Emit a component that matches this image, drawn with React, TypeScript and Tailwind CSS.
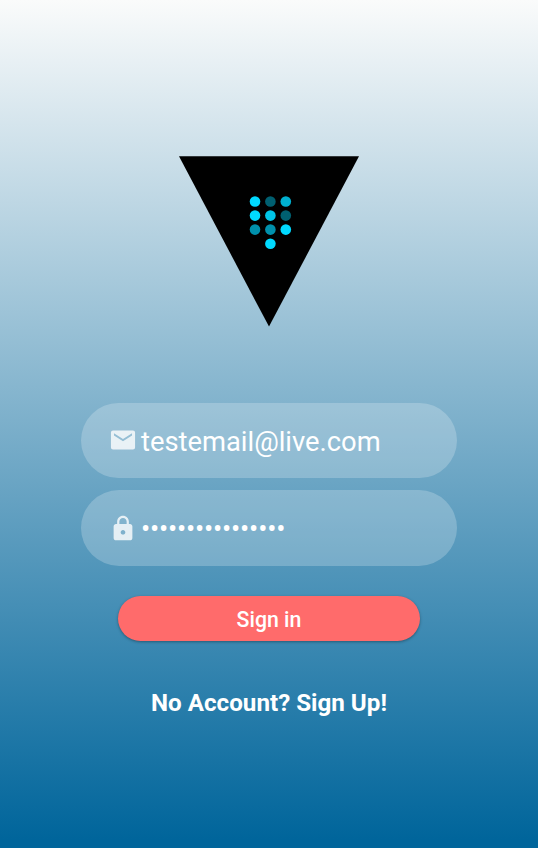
export default function App() {
  return (
    <main className="flex h-[848px] w-[538px] flex-col items-center overflow-hidden bg-[linear-gradient(180deg,#fafbfb_0%,#00659b_99%,#00659b_100%)] pt-[156px] font-[Roboto,sans-serif] text-white">
      <svg width="180" height="171" viewBox="0 0 180 171" aria-hidden="true">
        <path d="M0 .3h180L90 170.5z" fill="#000" />
        <g fill="#00d9ff">
          <circle cx="76" cy="45.5" r="5.3" />
          <circle cx="91.4" cy="45.5" r="5.3" fill="#005f70" />
          <circle cx="106.8" cy="45.5" r="5.3" fill="#00b0d0" />
          <circle cx="76" cy="59.6" r="5.3" />
          <circle cx="91.4" cy="59.6" r="5.3" fill="#00c5e8" />
          <circle cx="106.8" cy="59.6" r="5.3" fill="#005f70" />
          <circle cx="76" cy="73.6" r="5.3" fill="#0090ac" />
          <circle cx="91.4" cy="73.6" r="5.3" fill="#0090ac" />
          <circle cx="106.8" cy="73.6" r="5.3" />
          <circle cx="91.4" cy="87.7" r="5.3" />
        </g>
      </svg>
      <div className="mt-[76px] flex h-[75px] w-[376px] items-center rounded-full bg-white/[0.22] pl-[27px]">
        <svg width="30" height="30" viewBox="0 0 512 512" fill="currentColor" className="mb-px opacity-80"><path fillRule="evenodd" d="M86 94h340a36 36 0 0 1 36 36v252a36 36 0 0 1-36 36H86a36 36 0 0 1-36-36V130a36 36 0 0 1 36-36zm16 84 154 99 154-99v-39L256 238 102 139z" /></svg>
        <span className="ml-[3px] pt-[5px] text-[27.35px]">testemail@live.com</span>
      </div>
      <div className="mt-3 flex h-[76px] w-[376px] items-center rounded-full bg-white/[0.22] pl-[27px]">
        <svg width="30" height="30" viewBox="0 0 512 512" fill="currentColor" className="mb-px opacity-80"><path d="M376 186h-20v-40c0-55-45-100-100-100S156 91 156 146v40h-20c-22 0-40 18-40 40v200c0 22 18 40 40 40h240c22 0 40-18 40-40V226c0-22-18-40-40-40zM256 368c-22 0-40-18-40-40s18-40 40-40 40 18 40 40-18 40-40 40zm62-182H194v-40c0-34 28-62 62-62s62 28 62 62z" /></svg>
        <span className="ml-[3px] pt-[3px] text-[27.3px] tracking-[-0.2px]">••••••••••••••••</span>
      </div>
      <button className="mt-[30px] h-[45px] w-[302px] rounded-full bg-[#ff6b6b] pt-[2px] text-[21.3px] font-medium shadow-[0_1px_3px_rgba(0,0,0,0.35)]">Sign in</button>
      <a className="mt-[45px] text-[24.2px] leading-[34px] font-bold">No Account? Sign Up!</a>
    </main>
  );
}
